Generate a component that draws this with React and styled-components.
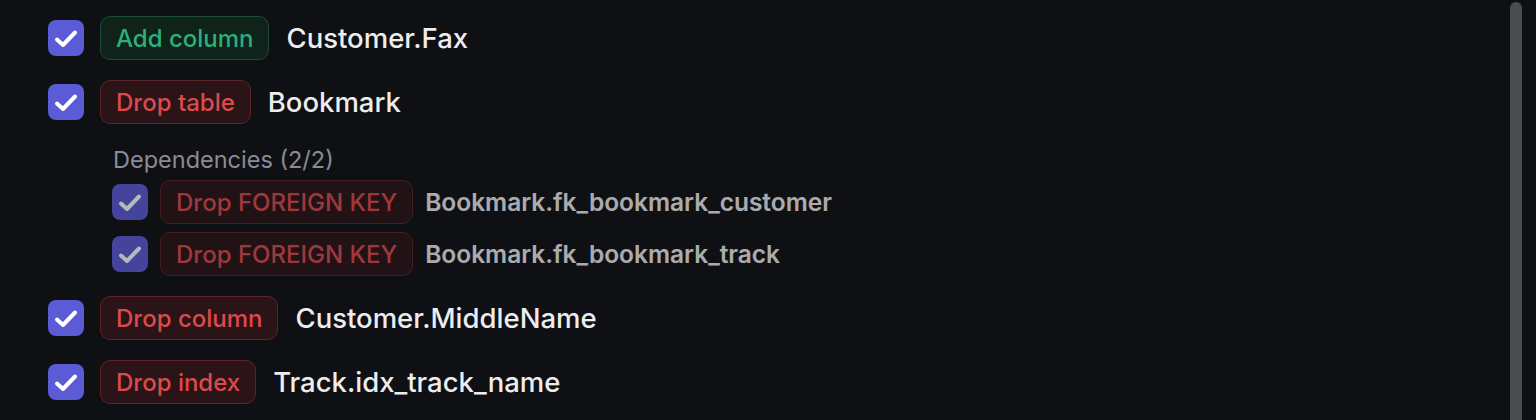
import React from 'react';
import styled, { createGlobalStyle, css } from 'styled-components';

const GlobalStyle = createGlobalStyle`
  html, body {
    margin: 0;
    padding: 0;
    background: #0f1014;
  }
  body {
    font-family: Inter, "Noto Sans", "Liberation Sans", sans-serif;
    color: #ededef;
    -webkit-font-smoothing: antialiased;
  }
`;

const Page = styled.div`
  position: relative;
  height: 420px;
  overflow: hidden;
  background: #0f1014;
`;

const ScrollThumb = styled.div`
  position: absolute;
  top: 2px;
  right: 14px;
  width: 12px;
  height: 430px;
  border-radius: 6px;
  background: #4a4b50;
`;

const List = styled.ul`
  list-style: none;
  margin: 0;
  padding: 16px 0 24px 48px;
  display: flex;
  flex-direction: column;
  gap: 20px;
`;

const Item = styled.li`
  display: flex;
  flex-direction: column;
`;

const Row = styled.div`
  display: flex;
  align-items: center;
  gap: ${(p) => (p.$nested ? '12px' : '16px')};
  height: 44px;
  ${(p) =>
    p.$nested &&
    css`
      opacity: 0.7;
    `}
`;

const Box = styled.span`
  width: 36px;
  height: 36px;
  border-radius: 8px;
  background: #5b5bd6;
  display: flex;
  align-items: center;
  justify-content: center;
  flex-shrink: 0;
`;

const tones = {
  add: css`
    color: #2bb07a;
    background: #0f231a;
    border-color: #1e4b37;
  `,
  drop: css`
    color: #dd4a4c;
    background: #2a1417;
    border-color: #5c2428;
  `,
};

const Badge = styled.span`
  box-sizing: border-box;
  height: 44px;
  display: inline-flex;
  align-items: center;
  padding: 0 15px;
  border: 1.5px solid;
  border-radius: 10px;
  font-size: 24px;
  font-weight: 500;
  ${(p) => tones[p.$tone]}
`;

const Name = styled.span`
  font-size: ${(p) => (p.$nested ? '24.5px' : '27.5px')};
  font-weight: ${(p) => (p.$nested ? 600 : 500)};
  color: #ededef;
  margin-left: ${(p) => (p.$nested ? '0' : '1px')};
`;

const Deps = styled.div`
  display: flex;
  flex-direction: column;
  gap: 8px;
  margin-top: 21px;
  padding-left: 64px;
`;

const DepsTitle = styled.div`
  font-size: 23.5px;
  line-height: 24px;
  padding-top: 3px;
  color: #8a8c96;
  margin-left: 1px;
`;

function Check() {
  return (
    <svg width="36" height="36" viewBox="0 0 36 36" fill="none">
      <path
        d="M9 19.5 L15 25 L27 12.5"
        stroke="#fff"
        strokeWidth="4"
        strokeLinecap="round"
        strokeLinejoin="round"
      />
    </svg>
  );
}

function Change({ tone, action, name, nested }) {
  return (
    <Row $nested={nested}>
      <Box>
        <Check />
      </Box>
      <Badge $tone={tone}>{action}</Badge>
      <Name $nested={nested}>{name}</Name>
    </Row>
  );
}

const changes = [
  { tone: 'add', action: 'Add column', name: 'Customer.Fax' },
  {
    tone: 'drop',
    action: 'Drop table',
    name: 'Bookmark',
    deps: [
      { tone: 'drop', action: 'Drop FOREIGN KEY', name: 'Bookmark.fk_bookmark_customer' },
      { tone: 'drop', action: 'Drop FOREIGN KEY', name: 'Bookmark.fk_bookmark_track' },
    ],
  },
  { tone: 'drop', action: 'Drop column', name: 'Customer.MiddleName' },
  { tone: 'drop', action: 'Drop index', name: 'Track.idx_track_name' },
];

export default function App() {
  return (
    <Page>
      <GlobalStyle />
      <List>
        {changes.map((c) => (
          <Item key={c.name}>
            <Change {...c} />
            {c.deps && (
              <Deps>
                <DepsTitle>
                  Dependencies ({c.deps.length}/{c.deps.length})
                </DepsTitle>
                {c.deps.map((d) => (
                  <Change key={d.name} {...d} nested />
                ))}
              </Deps>
            )}
          </Item>
        ))}
      </List>
      <ScrollThumb />
    </Page>
  );
}
